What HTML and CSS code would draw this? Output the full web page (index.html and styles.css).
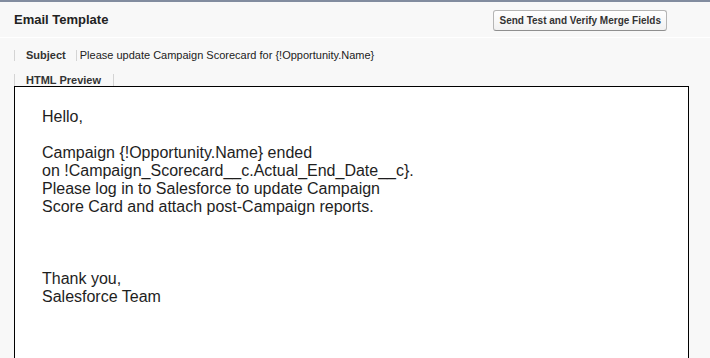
FILE: index.html
```html
<!DOCTYPE html>
<html>
<head>
<meta charset="utf-8">
<link rel="stylesheet" href="styles.css">
</head>
<body>
<div class="panel">
  <div class="header">
    <h2 class="title">Email Template</h2>
    <button class="btn" type="button">Send Test and Verify Merge Fields</button>
  </div>
  <div class="subject-row">
    <span class="label">Subject</span>
    <span class="value">Please update Campaign Scorecard for {!Opportunity.Name}</span>
  </div>
  <div class="tab-row">
    <span class="tab">HTML Preview</span>
  </div>
  <div class="preview">
    <p class="mail">Hello,<br><br>Campaign {!Opportunity.Name} ended<br>on !Campaign_Scorecard__c.Actual_End_Date__c}.<br>Please log in to Salesforce to update Campaign<br>Score Card and attach post-Campaign reports.<br><br><br><br>Thank you,<br>Salesforce Team</p>
  </div>
</div>
</body>
</html>
```
FILE: styles.css
```css
html, body {
  margin: 0;
  padding: 0;
  height: 358px;
  overflow: hidden;
}
body {
  background: #f8f8f8;
  font-family: Arial, "Liberation Sans", sans-serif;
  color: #222;
}
.panel {
  border-top: 2px solid #828c9f;
}
.header {
  height: 35px;
  display: flex;
  align-items: center;
  justify-content: space-between;
  padding: 0 43px 0 14px;
  border-bottom: 1px solid #ffffff;
}
.title {
  margin: 0;
  font-size: 13px;
  font-weight: bold;
  color: #222;
  line-height: 16px;
}
.btn {
  height: 21px;
  margin-top: 1px;
  padding: 0 5px;
  font-family: Arial, "Liberation Sans", sans-serif;
  font-size: 10px;
  font-weight: bold;
  color: #333;
  background: linear-gradient(#ffffff, #f1f1f1);
  border: 1px solid #b5b5b5;
  border-bottom-color: #8f8f8f;
  border-radius: 3px;
}
.subject-row {
  margin: 12px 0 0 14px;
  display: flex;
  font-size: 11px;
  line-height: 11px;
  height: 11px;
}
.label {
  font-weight: bold;
  color: #333;
  border-left: 1px solid #d4d4d4;
  border-right: 1px solid #d4d4d4;
  padding: 0 10px 0 11px;
}
.value {
  padding-left: 3px;
  color: #222;
}
.tab-row {
  margin: 13px 0 0 14px;
  display: flex;
  height: 12px;
}
.tab {
  font-size: 11px;
  line-height: 12px;
  font-weight: bold;
  color: #333;
  border-left: 1px solid #d4d4d4;
  border-right: 1px solid #d4d4d4;
  padding: 0 12px 0 11px;
}
.preview {
  margin-left: 14px;
  width: 675px;
  height: 320px;
  box-sizing: border-box;
  background: #ffffff;
  border: 1px solid #000000;
  padding: 21px 0 0 27px;
}
.mail {
  margin: 0;
  font-size: 16px;
  line-height: 18px;
  color: #1e1e1e;
}
```
